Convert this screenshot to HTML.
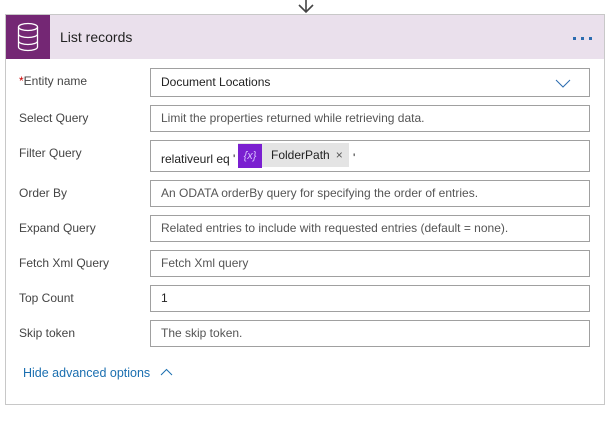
<!DOCTYPE html>
<html><head><meta charset="utf-8"><style>
*{margin:0;padding:0;box-sizing:border-box}
body{width:607px;height:427px;background:#fff;font-family:"Segoe UI","Liberation Sans",sans-serif;font-size:12px;color:#333;position:relative;overflow:hidden}
.card{position:absolute;left:5px;top:14px;width:600px;height:391px;border:1px solid #c8c8c8;background:#fff}
.hdr{position:absolute;left:0;top:0;width:598px;height:44px;background:#eae0ec}
.ico{position:absolute;left:0;top:0;width:44px;height:44px;background:#742774}
.title{position:absolute;left:54px;top:14px;font-size:14px;color:#222}
.dot{position:absolute;top:22px;width:3px;height:3px;background:#2b6cb0}
.lbl{position:absolute;left:19px;font-size:12px;color:#444}
.box{position:absolute;left:150px;width:440px;height:27px;border:1px solid #a0a0a0;padding:0 10px;line-height:25px;color:#555;font-size:12px;white-space:nowrap}
.val{color:#222}
.link{position:absolute;left:23px;top:366px;color:#1b6fb0;font-size:12.5px}
</style></head><body>
<svg style="position:absolute;left:296px;top:0" width="20" height="14"><path d="M10 0V11M3 5L10 12L17 5" stroke="#444" stroke-width="1.6" fill="none"/></svg>
<div class="card">
<div class="hdr">
<div class="ico"><svg width="44" height="44"><g fill="none" stroke="#fff" stroke-width="1.3"><ellipse cx="22" cy="12" rx="9.5" ry="3.5"/><path d="M12.5 12V32c0 2 4.5 3.5 9.5 3.5s9.5-1.5 9.5-3.5V12M12.5 19c0 2 4.5 3.5 9.5 3.5s9.5-1.5 9.5-3.5M12.5 26c0 2 4.5 3.5 9.5 3.5s9.5-1.5 9.5-3.5"/></g></svg></div>
<div class="title">List records</div>
<div class="dot" style="left:567px"></div><div class="dot" style="left:575px"></div><div class="dot" style="left:583px"></div>
</div>
</div>
<div class="lbl" style="top:74px"><span style="color:#c00">*</span>Entity name</div>
<div class="box val" style="top:68px;height:29px;line-height:27px">Document Locations<svg style="position:absolute;right:18px;top:10px" width="16" height="9"><path d="M1 1L8 8L15 1" stroke="#2b6cb0" stroke-width="1" fill="none"/></svg></div>
<div class="lbl" style="top:111px">Select Query</div>
<div class="box" style="top:105px">Limit the properties returned while retrieving data.</div>
<div class="lbl" style="top:146px">Filter Query</div>
<div class="box val" style="top:140px;height:32px;line-height:30px;padding-top:3px">relativeurl eq '
<span style="position:absolute;left:87px;top:2px;height:24px;width:111px;background:#e4e4e4;line-height:24px"><span style="display:inline-block;width:24px;height:24px;background:#7a1fd0;color:#d9c2ff;text-align:center;font-style:italic;font-size:11px">{x}</span><span style="margin-left:9px;color:#222">FolderPath</span><span style="margin-left:6px;color:#555">×</span></span>
<span style="position:absolute;left:202px;top:2px">'</span></div>
<div class="lbl" style="top:186px">Order By</div>
<div class="box" style="top:180px">An ODATA orderBy query for specifying the order of entries.</div>
<div class="lbl" style="top:221px">Expand Query</div>
<div class="box" style="top:215px">Related entries to include with requested entries (default = none).</div>
<div class="lbl" style="top:256px">Fetch Xml Query</div>
<div class="box" style="top:250px">Fetch Xml query</div>
<div class="lbl" style="top:291px">Top Count</div>
<div class="box val" style="top:285px">1</div>
<div class="lbl" style="top:326px">Skip token</div>
<div class="box" style="top:320px">The skip token.</div>
<div class="link">Hide advanced options <svg style="margin-left:6px;vertical-align:1px" width="13" height="8"><path d="M1 7L6.5 1.5L12 7" stroke="#1b6fb0" stroke-width="1" fill="none"/></svg></div>
</body></html>
